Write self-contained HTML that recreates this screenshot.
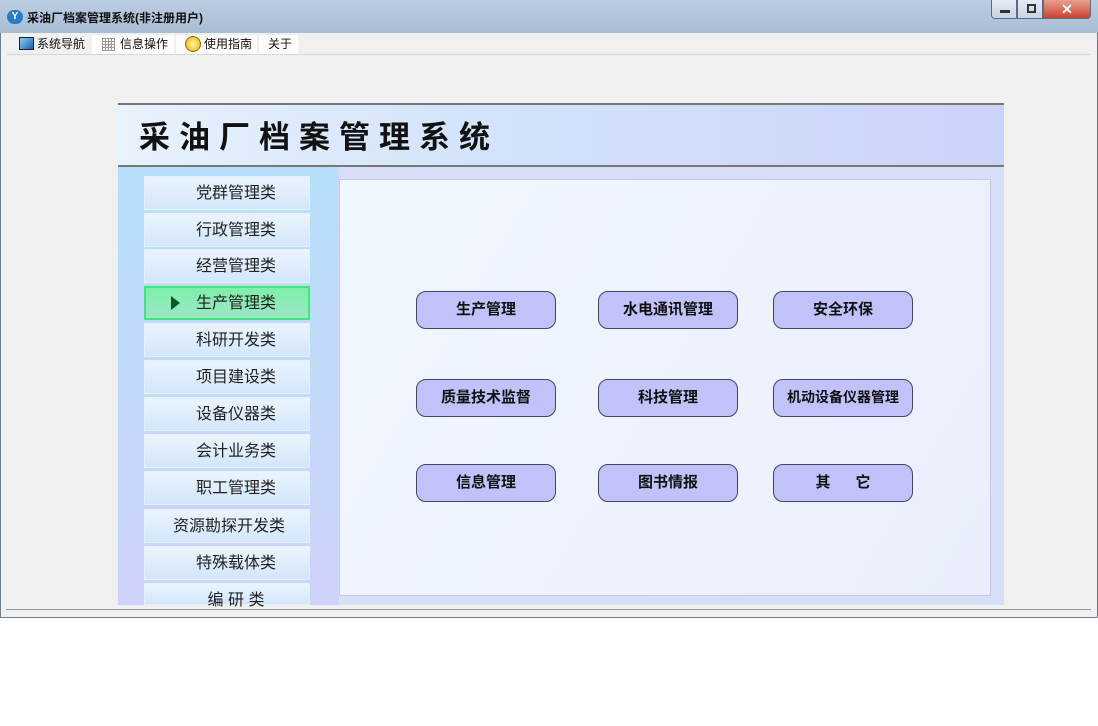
<!DOCTYPE html>
<html><head><meta charset="utf-8"><style>
*{margin:0;padding:0;box-sizing:border-box}
body{width:1098px;height:726px;background:#fff;position:relative;overflow:hidden;font-family:"Liberation Sans","Noto Sans CJK SC",sans-serif}
.win{position:absolute;left:0;top:0;width:1098px;height:618px;background:#f0f0f0;box-shadow:inset 0 0 0 1px #6f7e90}
.title{position:absolute;left:0;top:0;width:1098px;height:33px;background:linear-gradient(#bccde2,#a8bdd6);}
.title span{position:absolute;left:27px;top:9px;font-size:12px;font-weight:bold;color:#111}
.logo{position:absolute;left:7px;top:10px;width:16px;height:14px;border-radius:7px;background:#2a7bc4;color:#fff;font-size:10px;font-weight:bold;text-align:center;line-height:14px}
.ctl{position:absolute;top:0;height:19px;border:1px solid #5a6b80;border-top:none}
.menu{position:absolute;left:7px;top:33px;width:1083px;height:22px;background:#f0f0f0;border-bottom:1px solid #d8d8d8}
.mi{position:absolute;top:2px;height:19px;background:#fff;font-size:12px;line-height:19px;color:#111}
.inner{position:absolute;left:118px;top:103px;width:886px;height:502px;background:#d0d6fb}
.hdr{position:absolute;left:0;top:0;width:886px;height:64px;border-top:2px solid #777;border-bottom:2px solid #777;background:linear-gradient(90deg,#e8f2fc,#d4e3fb 40%,#ccd3fa)}
.hdr span{position:absolute;left:21px;top:7px;font-size:31px;font-weight:bold;letter-spacing:9px;color:#111}
.side{position:absolute;left:0;top:64px;width:220px;height:438px;background:linear-gradient(#b6e0fa,#cfd2fa)}
.sb{position:absolute;left:26px;width:166px;height:34px;background:linear-gradient(#eaf4fe,#d3e6fb);border:1px solid #e6f0fc;font-size:16px;color:#222;text-align:center;line-height:33px;padding-left:18px}
.sb.act{background:linear-gradient(#7df0aa,#9be6c6);border:2px solid #3fe67a}
.main{position:absolute;left:221px;top:64px;width:665px;height:438px;background:#d6def8}
.box{position:absolute;left:0;top:12px;width:652px;height:417px;background:linear-gradient(120deg,#f1f7fe,#eaeefc);border:1px solid #ccc8e4}
.b{position:absolute;width:140px;height:38px;border:1.5px solid #44465e;border-radius:10px;background:#c2c2fa;font-size:15px;font-weight:bold;text-align:center;line-height:35px;color:#111}
</style></head><body>
<div class="win">
<div class="title"><div class="logo">Y</div><span>采油厂档案管理系统(非注册用户)</span>
<div class="ctl" style="left:991px;width:26px;background:linear-gradient(#e4ebf4,#c8d3e2);border-radius:0 0 0 4px"><div style="position:absolute;left:8px;top:10px;width:10px;height:3px;background:#333"></div></div>
<div class="ctl" style="left:1017px;width:26px;background:linear-gradient(#e4ebf4,#c8d3e2)"><div style="position:absolute;left:9px;top:4px;width:9px;height:9px;border:2px solid #333"></div></div>
<div class="ctl" style="left:1043px;width:48px;background:linear-gradient(#e8a090,#c7432e);border-radius:0 0 4px 0;color:#fff;font-weight:bold;text-align:center;font-size:14px;line-height:18px">✕</div>
</div>
<div class="menu">
<div class="mi" style="left:3px;width:80px;background:#f0f0f0;padding-left:27px"><div style="position:absolute;left:9px;top:2px;width:15px;height:13px;border:1px solid #123;background:linear-gradient(135deg,#8cd0f5,#1a5fa8)"></div>系统导航</div>
<div class="mi" style="left:85px;width:82px;padding-left:28px"><div style="position:absolute;left:10px;top:3px;width:13px;height:13px;background:repeating-linear-gradient(90deg,#999 0 1px,transparent 1px 3px),repeating-linear-gradient(#999 0 1px,#fff 1px 3px)"></div>信息操作</div>
<div class="mi" style="left:169px;width:81px;padding-left:28px"><div style="position:absolute;left:9px;top:1px;width:16px;height:16px;border-radius:50%;background:radial-gradient(#fff6a0,#e9b000);border:1px solid #8a6a00"></div>使用指南</div>
<div class="mi" style="left:252px;width:39px;padding-left:9px">关于</div>
</div>
<div class="inner">
<div class="hdr"><span>采油厂档案管理系统</span></div>
<div class="side">
<div class="sb" style="top:9px">党群管理类</div>
<div class="sb" style="top:46px">行政管理类</div>
<div class="sb" style="top:82px">经营管理类</div>
<div class="sb act" style="top:119px;line-height:31px">生产管理类<span style="position:absolute;left:25px;top:8px;width:0;height:0;border-left:9px solid #0c5a1a;border-top:7px solid transparent;border-bottom:7px solid transparent"></span></div>
<div class="sb" style="top:156px">科研开发类</div>
<div class="sb" style="top:193px">项目建设类</div>
<div class="sb" style="top:230px">设备仪器类</div>
<div class="sb" style="top:267px">会计业务类</div>
<div class="sb" style="top:304px">职工管理类</div>
<div class="sb" style="top:342px;padding-left:4px">资源勘探开发类</div>
<div class="sb" style="top:379px">特殊载体类</div>
<div class="sb" style="top:416px;height:22px">编 研 类</div>
</div>
<div class="main"><div class="box"></div></div>
</div>
<div class="b" style="left:416px;top:291px">生产管理</div>
<div class="b" style="left:598px;top:291px">水电通讯管理</div>
<div class="b" style="left:773px;top:291px">安全环保</div>
<div class="b" style="left:416px;top:379px">质量技术监督</div>
<div class="b" style="left:598px;top:379px">科技管理</div>
<div class="b" style="left:773px;top:379px;font-size:14px">机动设备仪器管理</div>
<div class="b" style="left:416px;top:464px">信息管理</div>
<div class="b" style="left:598px;top:464px">图书情报</div>
<div class="b" style="left:773px;top:464px">其&nbsp;&nbsp;&nbsp;&nbsp;&nbsp;&nbsp;它</div>
<div style="position:absolute;left:6px;top:609px;width:1085px;height:1px;background:#999"></div>
</div>
</body></html>
